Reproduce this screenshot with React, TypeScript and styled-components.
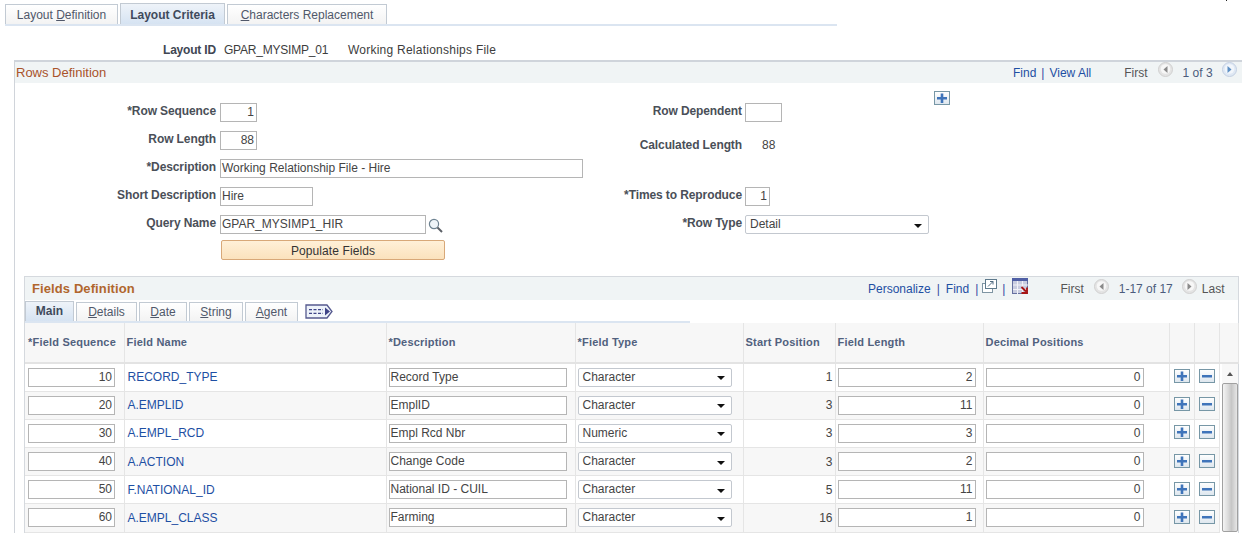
import React from 'react';
import styled, { createGlobalStyle } from 'styled-components';

const GlobalStyle = createGlobalStyle`
  html, body {
    margin: 0;
    padding: 0;
    height: 533px;
    overflow: hidden;
    background: #fff;
    font-family: "Liberation Sans", Arial, sans-serif;
    font-size: 12px;
    color: #3d3d3d;
  }
`;

const Page = styled.div`
  position: relative;
  width: 1242px;
  padding: 3px 0 0 5px;
  box-sizing: border-box;
`;

const CornerDot = styled.div`
  position: absolute;
  top: 0;
  left: 1226px;
  width: 1px;
  height: 1px;
  background: #222;
`;

const TabBar = styled.div`
  display: flex;
  align-items: flex-end;
  gap: 2px;
  width: 832px;
  height: 21px;
  border-bottom: 2px solid #dbe5f1;
`;

const Tab = styled.div<{ $active?: boolean; $w: number }>`
  width: ${(p) => p.$w}px;
  height: ${(p) => (p.$active ? 21 : 20)}px;
  box-sizing: border-box;
  border: 1px solid #c2cad3;
  border-bottom: none;
  display: flex;
  align-items: center;
  justify-content: center;
  padding-top: 1px;
  color: ${(p) => (p.$active ? '#3f4a5c' : '#50586a')};
  font-weight: ${(p) => (p.$active ? 700 : 400)};
  background: ${(p) =>
    p.$active ? 'linear-gradient(#eef3f9, #d6e3f2)' : 'linear-gradient(#ffffff, #f3f3f3)'};
`;

const LayoutRow = styled.div`
  display: flex;
  height: 34px;
  align-items: center;
  padding: 14px 0 0 158px;
  box-sizing: border-box;
`;

const Bold = styled.span`
  font-weight: 700;
  color: #404652;
  letter-spacing: -0.2px;
  margin-right: 8px;
`;

const LayoutValue = styled.span`
  width: 124px;
  color: #3d3d3d;
  letter-spacing: -0.2px;
`;

const LayoutName = styled.span`
  color: #3d3d3d;
  letter-spacing: 0.25px;
`;

const RowsPanel = styled.div`
  margin-left: 9px;
  width: 1240px;
  border-left: 1px solid #d0d4da;
  border-top: 2px solid #cfd4db;
  height: 480px;
`;

const PanelHead = styled.div`
  height: 21px;
  background: #f0f4f5;
  display: flex;
  align-items: center;
  padding-left: 1px;
`;

const RowsTitle = styled.div`
  color: #a9532b;
  flex: 1;
  font-size: 13px;
  margin-top: -1px;
`;

const Nav = styled.div`
  display: flex;
  align-items: center;
  color: #4a5a6a;
  width: 242px;
  flex: none;
  white-space: nowrap;
  svg { flex: none; margin-bottom: 6px; }
`;

const NavLink = styled.a`
  color: #1e4fa3;
`;

const Sep = styled.i<{ $l?: number; $r?: number }>`
  font-style: normal;
  color: #3a4aa3;
  margin: 0 ${(p) => p.$r ?? 5}px 0 ${(p) => p.$l ?? 5}px;
`;

const Pager = styled.span<{ $l: number; $r: number }>`
  margin-left: ${(p) => p.$l}px;
  margin-right: ${(p) => p.$r}px;
  color: #555;
`;

const Count = styled(Pager)`
  color: #4c5c7c;
`;

const ToolRow = styled.div`
  width: 935px;
  height: 20px;
  padding: 8px 0 0 919px;
  box-sizing: border-box;
`;

const FormGrid = styled.div`
  display: grid;
  grid-template-columns: 202px 363px 156px 186px;
  grid-auto-rows: 28px;
  column-gap: 3px;
`;

const Label = styled.label<{ $low?: boolean; $first?: boolean }>`
  text-align: right;
  font-weight: 700;
  color: #4a4f58;
  padding-top: ${(p) => (p.$low ? 7 : 1)}px;
  margin-right: ${(p) => (p.$first ? 1 : 0)}px;
  line-height: 14px;
  white-space: nowrap;
  letter-spacing: -0.1px;
`;

const Field = styled.div`
  display: flex;
  align-items: flex-start;
  gap: 2px;
`;

const TextBox = styled.div<{ $w: number; $right?: boolean }>`
  width: ${(p) => p.$w}px;
  height: 19px;
  flex: none;
  box-sizing: border-box;
  border: 1px solid #b5b5b5;
  background: #fff;
  line-height: 17px;
  padding: 0 2px 0 1px;
  white-space: nowrap;
  overflow: hidden;
  text-align: ${(p) => (p.$right ? 'right' : 'left')};
  color: #444;
`;

const SelectBox = styled.div<{ $w: number }>`
  width: ${(p) => p.$w}px;
  height: 19px;
  box-sizing: border-box;
  border: 1px solid #c3c8cf;
  border-radius: 2px;
  background: #fff;
  line-height: 17px;
  padding: 0 4px;
  color: #444;
  display: flex;
  justify-content: space-between;
  align-items: center;
  &::after {
    content: '';
    margin: 2px 2px 0 0;
    border-left: 4px solid transparent;
    border-right: 4px solid transparent;
    border-top: 4px solid #111;
  }
`;

const ValueText = styled.div`
  padding: 7px 0 0 17px;
  line-height: 14px;
  color: #444;
`;

const Populate = styled.div`
  grid-column: 2;
  margin: -3px 0 0 1px;
  width: 224px;
  height: 20px;
  box-sizing: border-box;
  border: 1px solid #d8a878;
  border-radius: 2px;
  background: linear-gradient(#fff0d8, #fbe2bd);
  text-align: center;
  line-height: 20px;
  letter-spacing: 0.1px;
  color: #333;
`;

const FieldsPanel = styled.div`
  margin: 5px 0 0 9px;
  width: 1215px;
  box-sizing: border-box;
  border: 1px solid #d5d9de;
  border-bottom: none;
`;

const FieldsHead = styled.div`
  height: 23px;
  background: #f0f4f5;
  display: flex;
  align-items: center;
  padding-left: 7px;
`;

const FieldsTitle = styled.div`
  flex: 1;
  color: #b0662c;
  font-weight: 700;
  font-size: 13px;
  letter-spacing: 0.1px;
`;

const GridNav = styled.div`
  display: flex;
  align-items: center;
  width: 370px;
  flex: none;
  white-space: nowrap;
  svg { flex: none; margin-bottom: 5px; }
`;

const GridTabs = styled.div`
  display: flex;
  align-items: flex-end;
  gap: 2px;
  height: 21px;
  width: 665px;
  border-bottom: 2px solid #dbe5f1;
`;

const GridTab = styled(Tab)`
  height: ${(p) => (p.$active ? 20 : 19)}px;
  padding-top: 0;
  padding-bottom: ${(p) => (p.$active ? 2 : 0)}px;
`;

const MoreTabs = styled.svg`
  margin: 0 0 2px 5px;
`;

const Table = styled.table`
  border-collapse: collapse;
  table-layout: fixed;
  width: 1213px;
`;

const HeadCell = styled.th`
  height: 40px;
  background: #f7f7f7;
  border-right: 1px solid #e5e5e5;
  border-bottom: 2px solid #e3e3e3;
  text-align: left;
  padding: 0 2px 2px;
  font-size: 11px;
  font-weight: 700;
  letter-spacing: 0.2px;
  color: #51617e;
  white-space: nowrap;
  box-sizing: border-box;
  &:first-child { padding-left: 3px; }
`;

const Row = styled.tr<{ $odd: boolean }>`
  background: ${(p) => (p.$odd ? '#f7f7f7' : '#fff')};
`;

const Cell = styled.td<{ $right?: boolean }>`
  height: 28px;
  box-sizing: border-box;
  border-right: 1px solid #e5e5e5;
  border-bottom: 1px solid #e5e5e5;
  padding: 0 2px;
  text-align: ${(p) => (p.$right ? 'right' : 'left')};
  color: #444;
  &:first-child { padding-left: 3px; }
`;

const ButtonCell = styled(Cell)`
  padding-bottom: 2px;
`;

const Link = styled.span`
  color: #1e4fa3;
  padding-left: 1px;
`;

const ScrollCell = styled.td`
  padding: 0 0 0 2px;
  vertical-align: top;
  background: #fff;
`;

const Scrollbar = styled.div`
  width: 16px;
  height: 168px;
  background: #f8f8f8;
  display: flex;
  flex-direction: column;
  align-items: center;
`;

const ScrollArrow = styled.div`
  height: 19px;
  flex: none;
  width: 100%;
  display: flex;
  justify-content: center;
  align-items: center;
  &::before {
    content: '';
    border-left: 3px solid transparent;
    border-right: 3px solid transparent;
    border-bottom: 4px solid #555;
  }
`;

const ScrollThumb = styled.div`
  flex: 1;
  width: 100%;
  box-sizing: border-box;
  border: 1px solid #a0a0a0;
  border-radius: 2px;
  background: linear-gradient(90deg, #f4f4f4, #dcdcdc 35%, #c6c6c6 60%, #e6e6e6);
`;

const SmallButton = styled.svg`
  display: block;
  margin: 0 auto;
`;

const SearchIcon = styled.svg`
  margin-top: 3px;
`;

const PtButton: React.FC<{ kind: 'plus' | 'minus' }> = ({ kind }) => (
  <SmallButton width="16" height="14" viewBox="0 0 16 14">
    <defs>
      <linearGradient id={`pt-${kind}`} x1="0" y1="0" x2="0" y2="1">
        <stop offset="0" stopColor="#ffffff" />
        <stop offset="1" stopColor="#dde6ee" />
      </linearGradient>
    </defs>
    <rect x="0.5" y="0.5" width="15" height="13" fill={`url(#pt-${kind})`} stroke="#7797a6" />
    <rect x="3" y="6" width="10" height="2.5" fill="#3f74ba" />
    {kind === 'plus' && <rect x="6.7" y="2.5" width="2.6" height="9.5" fill="#3f74ba" />}
  </SmallButton>
);

const Arrow: React.FC<{ dir: 'left' | 'right'; blue?: boolean }> = ({ dir, blue }) => (
  <svg width="15" height="15" viewBox="0 0 15 15">
    <circle cx="7.5" cy="7.5" r="7" fill={blue ? '#dfe8f4' : '#e4e4e4'} stroke={blue ? '#c4d0e2' : '#d0d0d0'} />
    <circle cx="7.5" cy="7" r="4.8" fill={blue ? '#f2f6fb' : '#f7f7f7'} />
    <path d={dir === 'left' ? 'M9.5 4 L5.5 7.5 L9.5 11 Z' : 'M5.5 4 L9.5 7.5 L5.5 11 Z'} fill={blue ? '#5d8fc4' : '#8a8a8a'} />
  </svg>
);

const Magnifier = () => (
  <SearchIcon width="15" height="15" viewBox="0 0 15 15">
    <circle cx="6" cy="6" r="4.6" fill="#eef4f8" stroke="#6d8291" strokeWidth="1.2" />
    <path d="M9.5 9.5 L14 14" stroke="#5a5f66" strokeWidth="2" />
  </SearchIcon>
);

const NewWindowIcon = () => (
  <svg width="15" height="14" viewBox="0 0 15 14">
    <rect x="0.5" y="4.5" width="10" height="9" fill="#fff" stroke="#7f95a3" />
    <rect x="3.5" y="0.5" width="11" height="9" fill="#fff" stroke="#5f7a8c" />
    <path d="M6 7.5 L11 2.5 M8 2.5 H11 V5.5" stroke="#4f6b80" fill="none" />
  </svg>
);

const DownloadIcon = () => (
  <svg width="17" height="17" viewBox="0 0 17 17">
    <rect x="0.5" y="0.5" width="15" height="15" fill="#c9cde0" stroke="#6670a0" />
    <rect x="0" y="0" width="16" height="3" fill="#4f5fa5" />
    <path d="M5.5 3 V16 M10.5 3 V16 M1 7 H16 M1 11.5 H16" stroke="#f2f2f8" />
    <path d="M9.5 9 L14 13.5 M15 9.5 V15 H9.5" stroke="#a81414" strokeWidth="1.8" fill="none" />
  </svg>
);

const columns = [
  { title: '*Field Sequence', w: 99 },
  { title: 'Field Name', w: 262 },
  { title: '*Description', w: 189 },
  { title: '*Field Type', w: 168 },
  { title: 'Start Position', w: 92 },
  { title: 'Field Length', w: 148 },
  { title: 'Decimal Positions', w: 186 },
  { title: '', w: 25 },
  { title: '', w: 25 },
  { title: '', w: 19 },
];

const rows = [
  { seq: 10, name: 'RECORD_TYPE', desc: 'Record Type', type: 'Character', start: 1, len: 2 },
  { seq: 20, name: 'A.EMPLID', desc: 'EmplID', type: 'Character', start: 3, len: 11 },
  { seq: 30, name: 'A.EMPL_RCD', desc: 'Empl Rcd Nbr', type: 'Numeric', start: 3, len: 3 },
  { seq: 40, name: 'A.ACTION', desc: 'Change Code', type: 'Character', start: 3, len: 2 },
  { seq: 50, name: 'F.NATIONAL_ID', desc: 'National ID - CUIL', type: 'Character', start: 5, len: 11 },
  { seq: 60, name: 'A.EMPL_CLASS', desc: 'Farming', type: 'Character', start: 16, len: 1 },
];

export default function App() {
  return (
    <Page>
      <GlobalStyle />
      <CornerDot />
      <TabBar>
        <Tab $w={113}><span>Layout <u>D</u>efinition</span></Tab>
        <Tab $w={105} $active>Layout Criteria</Tab>
        <Tab $w={160}><span><u>C</u>haracters Replacement</span></Tab>
      </TabBar>
      <LayoutRow>
        <Bold>Layout ID</Bold>
        <LayoutValue>GPAR_MYSIMP_01</LayoutValue>
        <LayoutName>Working Relationships File</LayoutName>
      </LayoutRow>
      <RowsPanel>
        <PanelHead>
          <RowsTitle>Rows Definition</RowsTitle>
          <Nav>
            <NavLink>Find</NavLink><Sep>|</Sep><NavLink>View All</NavLink>
            <Pager $l={33} $r={10}>First</Pager>
            <Arrow dir="left" />
            <Count $l={10} $r={9}>1 of 3</Count>
            <Arrow dir="right" blue />
            <Pager $l={5} $r={0}>Last</Pager>
          </Nav>
        </PanelHead>
        <ToolRow><PtButton kind="plus" /></ToolRow>
        <FormGrid>
          <Label $first>*Row Sequence</Label>
          <Field><TextBox $w={37} $right>1</TextBox></Field>
          <Label>Row Dependent</Label>
          <Field><TextBox $w={37} /></Field>

          <Label $first>Row Length</Label>
          <Field><TextBox $w={37} $right>88</TextBox></Field>
          <Label $low>Calculated Length</Label>
          <ValueText>88</ValueText>

          <Label $first>*Description</Label>
          <Field><TextBox $w={363}>Working Relationship File - Hire</TextBox></Field>
          <span />
          <span />

          <Label $first>Short Description</Label>
          <Field><TextBox $w={93}>Hire</TextBox></Field>
          <Label>*Times to Reproduce</Label>
          <Field><TextBox $w={25} $right>1</TextBox></Field>

          <Label $first>Query Name</Label>
          <Field><TextBox $w={206}>GPAR_MYSIMP1_HIR</TextBox><Magnifier /></Field>
          <Label>*Row Type</Label>
          <Field><SelectBox $w={184}>Detail</SelectBox></Field>

          <Populate>Populate Fields</Populate>
        </FormGrid>
        <FieldsPanel>
          <FieldsHead>
            <FieldsTitle>Fields Definition</FieldsTitle>
            <GridNav>
              <NavLink>Personalize</NavLink><Sep $l={6} $r={6}>|</Sep><NavLink>Find</NavLink><Sep $l={6} $r={4}>|</Sep>
              <NewWindowIcon /><Sep $l={5} $r={7}>|</Sep><DownloadIcon />
              <Pager $l={31} $r={10}>First</Pager>
              <Arrow dir="left" />
              <Count $l={10} $r={9}>1-17 of 17</Count>
              <Arrow dir="right" />
              <Pager $l={5} $r={0}>Last</Pager>
            </GridNav>
          </FieldsHead>
          <GridTabs>
            <GridTab $w={49} $active>Main</GridTab>
            <GridTab $w={61}><span><u>D</u>etails</span></GridTab>
            <GridTab $w={48}><span><u>D</u>ate</span></GridTab>
            <GridTab $w={54}><span><u>S</u>tring</span></GridTab>
            <GridTab $w={53}><span><u>A</u>gent</span></GridTab>
            <MoreTabs width="28" height="15" viewBox="0 0 28 15">
              <path d="M1 1 H22 L27 7.5 L22 14 H1 Z" fill="#edf2fa" stroke="#55598f" strokeWidth="1.3" />
              <path d="M4 5.7 H18 M4 9.3 H18" stroke="#3f4488" strokeWidth="1.3" strokeDasharray="3 1.5" />
              <path d="M20 3.5 L25 7.5 L20 11.5 Z" fill="#3f4488" />
            </MoreTabs>
          </GridTabs>
          <Table>
            <colgroup>
              {columns.map((c, i) => <col key={i} width={c.w} />)}
            </colgroup>
            <thead>
              <tr>
                {columns.map((c, i) => <HeadCell key={i}>{c.title}</HeadCell>)}
              </tr>
            </thead>
            <tbody>
              {rows.map((r, i) => (
                <Row key={r.seq} $odd={i % 2 === 1}>
                  <Cell><TextBox $w={87} $right>{r.seq}</TextBox></Cell>
                  <Cell><Link>{r.name}</Link></Cell>
                  <Cell><TextBox $w={178}>{r.desc}</TextBox></Cell>
                  <Cell><SelectBox $w={154}>{r.type}</SelectBox></Cell>
                  <Cell $right>{r.start}</Cell>
                  <Cell><TextBox $w={138} $right>{r.len}</TextBox></Cell>
                  <Cell><TextBox $w={158} $right>0</TextBox></Cell>
                  <ButtonCell><PtButton kind="plus" /></ButtonCell>
                  <ButtonCell><PtButton kind="minus" /></ButtonCell>
                  {i === 0 && (
                    <ScrollCell rowSpan={rows.length}>
                      <Scrollbar>
                        <ScrollArrow />
                        <ScrollThumb />
                      </Scrollbar>
                    </ScrollCell>
                  )}
                </Row>
              ))}
            </tbody>
          </Table>
        </FieldsPanel>
      </RowsPanel>
    </Page>
  );
}
